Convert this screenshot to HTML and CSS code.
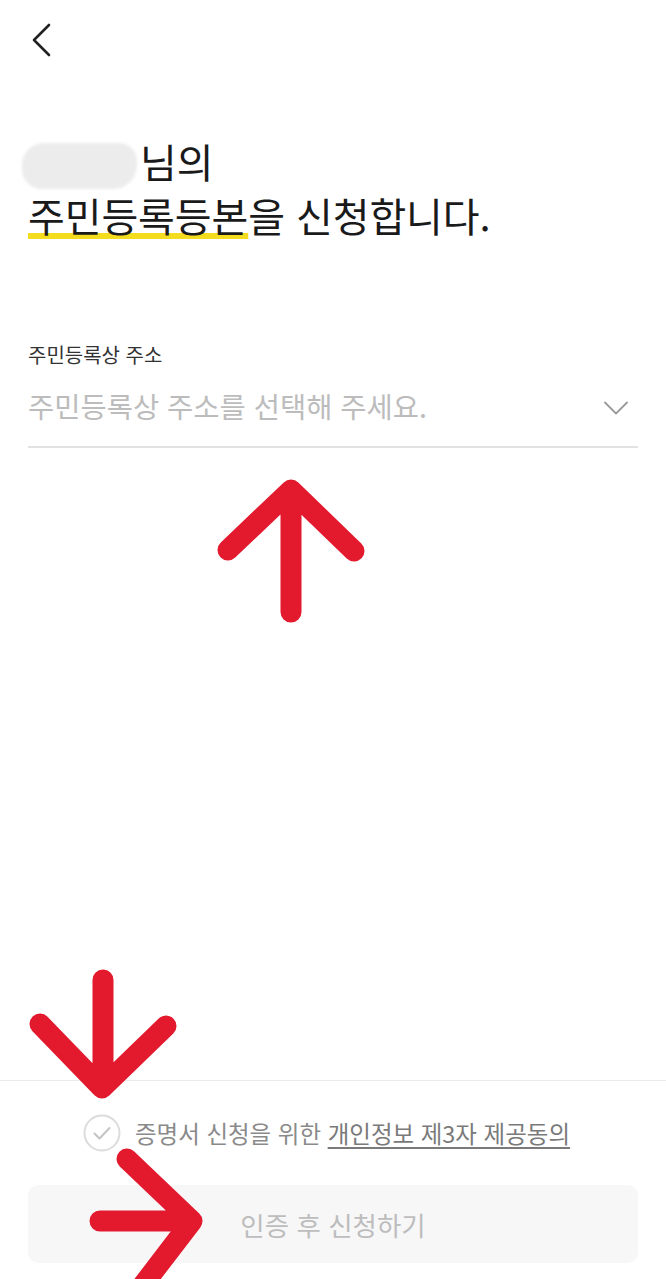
FILE: index.html
```html
<!DOCTYPE html>
<html lang="ko">
<head>
<meta charset="utf-8">
<title>주민등록등본 신청</title>
<link rel="stylesheet" href="styles.css">
</head>
<body>
<div class="screen">
  <header class="topbar">
    <button class="back" aria-label="뒤로">
      <svg width="24" height="36" viewBox="0 0 24 36"><polyline points="19,2 4,17 19,32" fill="none" stroke="#222" stroke-width="2.6" stroke-linecap="round" stroke-linejoin="round"/></svg>
    </button>
  </header>

  <h1 class="title">
    <span class="line"><span class="name-blur"></span>님의</span>
    <span class="line"><span class="hl">주민등록등본</span>을 신청합니다.</span>
  </h1>

  <section class="field">
    <div class="field-label">주민등록상 주소</div>
    <div class="select">
      <span class="placeholder">주민등록상 주소를 선택해 주세요.</span>
      <svg class="chev" width="24" height="14" viewBox="0 0 24 14"><polyline points="1,1.5 12,12.5 23,1.5" fill="none" stroke="#9a9a9a" stroke-width="1.8" stroke-linecap="round" stroke-linejoin="round"/></svg>
    </div>
  </section>

  <footer class="bottom">
    <label class="agree">
      <svg class="check" width="38" height="38" viewBox="0 0 38 38"><circle cx="19" cy="19" r="17.5" fill="#fff" stroke="#dcdcdc" stroke-width="2"/><polyline points="11.5,19.5 16.5,24.5 26.5,14" fill="none" stroke="#c4c4c4" stroke-width="2" stroke-linecap="round" stroke-linejoin="round"/></svg>
      <span class="agree-text">증명서 신청을 위한 <u class="link">개인정보 제3자 제공동의</u></span>
    </label>
    <button class="submit">인증 후 신청하기</button>
  </footer>

  <svg class="annot" width="666" height="1279" viewBox="0 0 666 1279">
    <g fill="none" stroke="#e3192e" stroke-width="21" stroke-linecap="round" stroke-linejoin="round">
      <path d="M291,612 L291,492 M228,550 L291,490 L354,551"/>
      <path d="M103,980 L103,1085 M40,1024 L102,1088 L166,1026"/>
      <path d="M100,1221 L190,1221 M127,1159 L192,1221 L130,1302"/>
    </g>
  </svg>
</div>
</body>
</html>
```

FILE: styles.css
```css
* { box-sizing: border-box; }
html, body { margin: 0; padding: 0; background: #fff; }
body {
  font-family: "Noto Sans CJK KR", "Noto Sans", sans-serif;
  color: #1a1a1a;
}
.screen {
  position: relative;
  width: 666px;
  height: 1279px;
  display: flex;
  flex-direction: column;
  overflow: hidden;
}
.topbar {
  height: 82px;
  display: flex;
  align-items: center;
  padding-left: 30px;
}
.back {
  border: 0;
  background: none;
  padding: 0;
  width: 24px;
  height: 36px;
  display: flex;
}
.title {
  margin: 52px 0 0;
  padding: 0 28px;
  font-size: 40px;
  font-weight: 400;
  line-height: 54px;
  letter-spacing: -0.1px;
}
.line { display: block; height: 54px; white-space: nowrap; }
.name-blur {
  display: inline-block;
  width: 115px;
  height: 46px;
  margin-left: -6px;
  margin-right: 3px;
  vertical-align: -11px;
  background: #ececec;
  border-radius: 22px 18px 24px 20px;
  filter: blur(1.5px);
}
.hl {
  text-decoration: underline;
  text-decoration-color: #f4dc1f;
  text-decoration-thickness: 6px;
  text-underline-offset: 1px;
  text-decoration-skip-ink: none;
}
.field {
  margin: 98px 28px 0;
}
.field-label {
  font-size: 20px;
  line-height: 30px;
  color: #333;
}
.select {
  display: flex;
  align-items: center;
  justify-content: space-between;
  padding: 16px 10px 20px 0;
  border-bottom: 2px solid #e2e2e2;
}
.placeholder {
  font-size: 28.5px;
  line-height: 40px;
  color: #bcbcbc;
}
.chev { margin-top: 4px; }
.bottom {
  margin-top: auto;
  border-top: 1px solid #ebebeb;
  padding: 33px 28px 16px;
  display: flex;
  flex-direction: column;
  align-items: stretch;
}
.agree {
  display: flex;
  align-items: center;
  justify-content: center;
  gap: 14px;
  height: 38px;
  margin-left: -13px;
}
.agree-text {
  font-size: 23.5px;
  color: #8a8a8a;
  white-space: nowrap;
}
.link {
  color: #7a7a7a;
  text-underline-offset: 4px;
  text-decoration-thickness: 1.5px;
}
.submit {
  margin-top: 33px;
  height: 78px;
  border: 0;
  border-radius: 10px;
  background: #f7f7f8;
  color: #bdbdbd;
  font-family: inherit;
  font-size: 26.5px;
}
.annot {
  position: absolute;
  left: 0;
  top: 0;
  pointer-events: none;
}
```
